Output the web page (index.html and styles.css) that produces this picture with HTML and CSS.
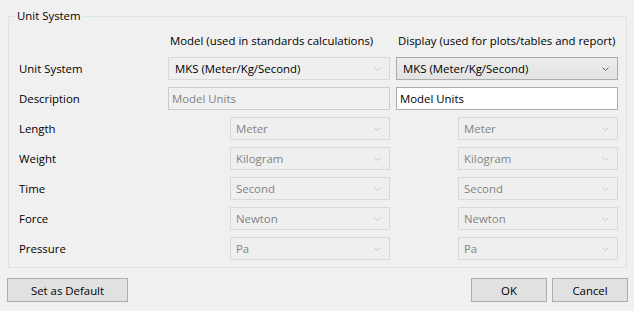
FILE: index.html
```html
<!DOCTYPE html>
<html lang="en">
<head>
  <meta charset="UTF-8" />
  <title>Unit System</title>
  <link rel="stylesheet" href="styles.css">
</head>
<body>
  <div class="dialog">
    <fieldset class="group">
      <legend>Unit System</legend>
      <div class="grid">
        <div></div>
        <div class="head">Model (used in standards calculations)</div>
        <div class="head">Display (used for plots/tables and report)</div>

        <div class="label">Unit System</div>
        <div class="combo disabled wide dark"><span>MKS (Meter/Kg/Second)</span><svg width="7" height="4" viewBox="0 0 7 4"><path d="M0.5 0.5 L3.5 3.5 L6.5 0.5" /></svg></div>
        <div class="combo wide"><span>MKS (Meter/Kg/Second)</span><svg width="7" height="4" viewBox="0 0 7 4"><path d="M0.5 0.5 L3.5 3.5 L6.5 0.5" /></svg></div>

        <div class="label">Description</div>
        <div class="text disabled">Model Units</div>
        <div class="text">Model Units</div>

        <div class="label">Length</div>
        <div class="combo disabled"><span>Meter</span><svg width="7" height="4" viewBox="0 0 7 4"><path d="M0.5 0.5 L3.5 3.5 L6.5 0.5" /></svg></div>
        <div class="combo disabled"><span>Meter</span><svg width="7" height="4" viewBox="0 0 7 4"><path d="M0.5 0.5 L3.5 3.5 L6.5 0.5" /></svg></div>

        <div class="label">Weight</div>
        <div class="combo disabled"><span>Kilogram</span><svg width="7" height="4" viewBox="0 0 7 4"><path d="M0.5 0.5 L3.5 3.5 L6.5 0.5" /></svg></div>
        <div class="combo disabled"><span>Kilogram</span><svg width="7" height="4" viewBox="0 0 7 4"><path d="M0.5 0.5 L3.5 3.5 L6.5 0.5" /></svg></div>

        <div class="label">Time</div>
        <div class="combo disabled"><span>Second</span><svg width="7" height="4" viewBox="0 0 7 4"><path d="M0.5 0.5 L3.5 3.5 L6.5 0.5" /></svg></div>
        <div class="combo disabled"><span>Second</span><svg width="7" height="4" viewBox="0 0 7 4"><path d="M0.5 0.5 L3.5 3.5 L6.5 0.5" /></svg></div>

        <div class="label">Force</div>
        <div class="combo disabled"><span>Newton</span><svg width="7" height="4" viewBox="0 0 7 4"><path d="M0.5 0.5 L3.5 3.5 L6.5 0.5" /></svg></div>
        <div class="combo disabled"><span>Newton</span><svg width="7" height="4" viewBox="0 0 7 4"><path d="M0.5 0.5 L3.5 3.5 L6.5 0.5" /></svg></div>

        <div class="label">Pressure</div>
        <div class="combo disabled"><span>Pa</span><svg width="7" height="4" viewBox="0 0 7 4"><path d="M0.5 0.5 L3.5 3.5 L6.5 0.5" /></svg></div>
        <div class="combo disabled"><span>Pa</span><svg width="7" height="4" viewBox="0 0 7 4"><path d="M0.5 0.5 L3.5 3.5 L6.5 0.5" /></svg></div>
      </div>
    </fieldset>

    <div class="buttons">
      <button class="btn default">Set as Default</button>
      <div class="spacer"></div>
      <button class="btn">OK</button>
      <button class="btn">Cancel</button>
    </div>
  </div>
</body>
</html>
```

FILE: styles.css
```css
* {
  box-sizing: border-box;
}

body {
  margin: 0;
  background: #f0f0f0;
  font-family: "Open Sans", "Noto Sans", sans-serif;
  font-size: 11.4px;
  color: #000;
}

.dialog {
  padding-top: 8px;
}

.group {
  margin: 0 7px 0 8px;
  padding: 7px 8px 7px 10px;
  border: 1px solid #dce3e8;
  min-width: 0;
}

.group legend {
  margin-left: -4px;
  padding: 0 2px;
  line-height: 16px;
}

.grid {
  display: grid;
  grid-template-columns: 143px 222px 222px;
  grid-template-rows: 19px repeat(7, 23px);
  column-gap: 6px;
  row-gap: 7px;
}

.head {
  line-height: 19px;
  padding-left: 2px;
  white-space: nowrap;
}

.label {
  display: flex;
  align-items: center;
}

.combo {
  display: flex;
  align-items: center;
  justify-content: space-between;
  width: 160px;
  justify-self: end;
  height: 23px;
  padding: 0 8px 0 5px;
  border: 1px solid #acacac;
  background: linear-gradient(#ececec, #e3e3e3);
}

.combo.wide {
  width: 222px;
  padding-left: 6px;
}

.combo svg path {
  fill: none;
  stroke: #606060;
  stroke-width: 1;
}

.combo.disabled {
  border-color: #d9d9d9;
  background: #efefef;
  color: #838383;
}

.combo.disabled.dark {
  color: #000;
}

.combo.disabled svg path {
  stroke: #c4c4c4;
}

.text {
  display: flex;
  align-items: center;
  height: 23px;
  padding-left: 3px;
  border: 1px solid #acacac;
  background: #fff;
}

.text.disabled {
  border-color: #cccccc;
  background: #f0f0f0;
  color: #838383;
}

.buttons {
  display: flex;
  gap: 5px;
  margin-top: 10px;
  padding: 0 6px 0 7px;
}

.spacer {
  flex: 1;
}

.btn {
  width: 76px;
  height: 24px;
  border: 1px solid #adadad;
  background: #e1e1e1;
  font-family: inherit;
  font-size: inherit;
  color: #000;
  padding: 0;
}

.btn.default {
  width: 121px;
}
```
